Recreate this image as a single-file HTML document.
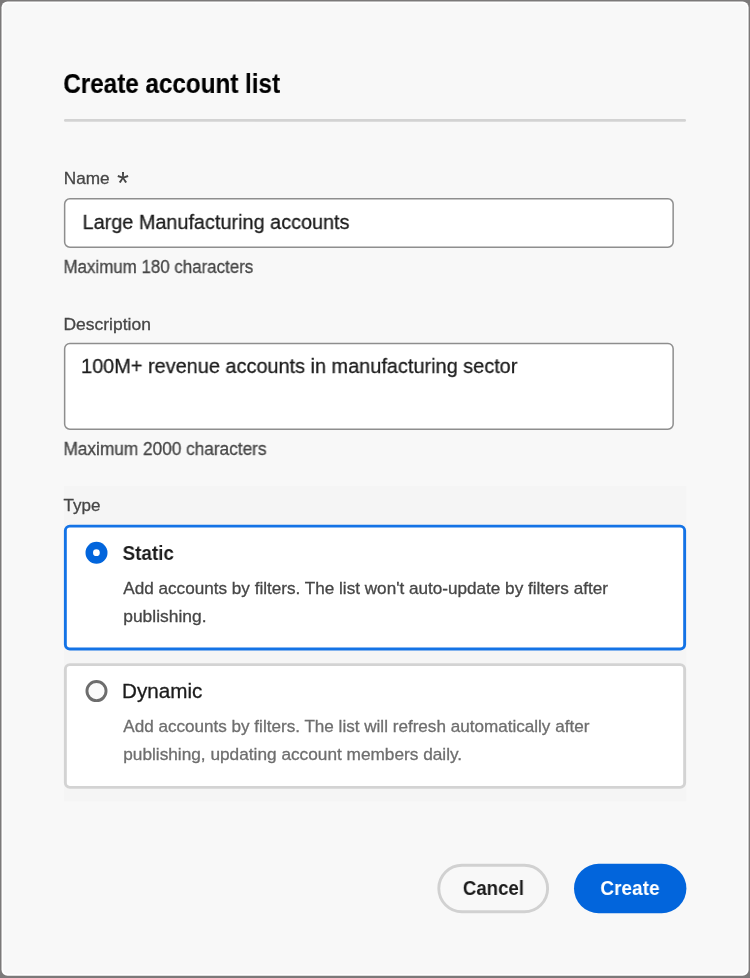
<!DOCTYPE html>
<html lang="en">
<head>
<meta charset="utf-8">
<title>Create account list</title>
<style>
html,body{margin:0;padding:0}
body{width:750px;height:978px;position:relative;overflow:hidden;background:#7b7979;font-family:"Liberation Sans",sans-serif}
h2,p,label,button,form,fieldset,legend{margin:0;padding:0;border:0;font:inherit;background:none;min-width:0}
.abs{position:absolute;left:0;top:0}
.t{position:absolute;left:0;white-space:nowrap;line-height:1;transform-origin:0 0;display:block;will-change:transform;-webkit-text-stroke:0.3px currentColor}
button.t{cursor:pointer;text-align:left}
#t_title{top:70px;font-size:27.5px;font-weight:700;color:#000000;-webkit-text-stroke:0.2px currentColor;transform:translateX(63.36px) scaleX(0.8807)}
#t_name{top:170px;font-size:17px;font-weight:400;color:#464646;transform:translateX(63.74px) scaleX(1.0115)}
#t_ast{top:168px;font-size:30.5px;font-weight:400;color:#464646;-webkit-text-stroke:0;transform:translateX(117.00px) scaleX(1.0049)}
#t_nameval{top:212px;font-size:20.5px;font-weight:400;color:#1c1c1c;transform:translateX(82.55px) scaleX(0.9679)}
#t_max1{top:259px;font-size:17.5px;font-weight:400;color:#464646;transform:translateX(63.54px) scaleX(0.9653)}
#t_desc{top:316px;font-size:17px;font-weight:400;color:#464646;transform:translateX(63.47px) scaleX(1.0278)}
#t_descval{top:356px;font-size:20.5px;font-weight:400;color:#1c1c1c;transform:translateX(81.04px) scaleX(0.9706)}
#t_max2{top:441px;font-size:17.5px;font-weight:400;color:#464646;transform:translateX(63.52px) scaleX(0.9844)}
#t_type{top:497px;font-size:17px;font-weight:400;color:#464646;transform:translateX(63.50px) scaleX(1.0000)}
#t_static{top:542px;font-size:21px;font-weight:700;color:#1c1c1c;-webkit-text-stroke:0;transform:translateX(122.56px) scaleX(0.8973)}
#t_s1{top:580px;font-size:17px;font-weight:400;color:#464646;transform:translateX(123.25px) scaleX(1.0075)}
#t_s2{top:608px;font-size:17px;font-weight:400;color:#464646;transform:translateX(123.22px) scaleX(1.0248)}
#t_dynamic{top:681px;font-size:20.5px;font-weight:400;color:#1c1c1c;transform:translateX(121.99px) scaleX(1.0077)}
#t_d1{top:718px;font-size:17px;font-weight:400;color:#6e6e6e;transform:translateX(123.25px) scaleX(1.0054)}
#t_d2{top:746px;font-size:17px;font-weight:400;color:#6e6e6e;transform:translateX(123.24px) scaleX(1.0140)}
#t_cancel{top:877px;font-size:21px;font-weight:700;color:#1c1c1c;-webkit-text-stroke:0;transform:translateX(462.85px) scaleX(0.8880)}
#t_create{top:877px;font-size:21px;font-weight:700;color:#ffffff;-webkit-text-stroke:0;transform:translateX(600.32px) scaleX(0.9062)}
</style>
</head>
<body>
<div id="dialog" role="dialog" aria-modal="true" aria-labelledby="t_title">
<svg class="abs" id="shapes" width="750" height="978" viewBox="0 0 750 978" aria-hidden="true">
<!-- dialog panel -->
<rect x="1.5" y="1.6" width="747.1" height="974.2" rx="6" fill="#ffffff"/>
<rect x="3.2" y="3.3" width="743.8" height="970.8" rx="4.5" fill="#f8f8f8"/>
<!-- heading divider -->
<rect x="64" y="119.1" width="622" height="2.6" rx="1.3" fill="#d3d3d3"/>
<!-- name field -->
<rect x="64.65" y="198.85" width="608.5" height="48.3" rx="5.2" fill="#ffffff" stroke="#8e8e8e" stroke-width="1.5"/>
<!-- description field -->
<rect x="64.65" y="343.55" width="608.5" height="85.6" rx="5.2" fill="#ffffff" stroke="#8e8e8e" stroke-width="1.5"/>
<!-- type band -->
<rect x="64" y="486" width="622.4" height="315.2" fill="#f5f5f5"/>
<!-- static card (selected) -->
<rect x="65.35" y="526.1" width="619.3" height="122.9" rx="4.5" fill="#ffffff" stroke="#1473e6" stroke-width="2.9"/>
<!-- dynamic card -->
<rect x="65.35" y="664.65" width="619.3" height="122.7" rx="4.5" fill="#ffffff" stroke="#d3d3d3" stroke-width="2.9"/>
<!-- radio: selected -->
<circle cx="96.5" cy="552.8" r="11" fill="#0265dc"/>
<circle cx="96.4" cy="552.7" r="3.4" fill="#ffffff"/>
<!-- radio: unselected -->
<circle cx="96.5" cy="691.1" r="9.55" fill="#fbfbfb" stroke="#6d6d6d" stroke-width="2.9"/>
<!-- buttons -->
<rect x="438.8" y="865.2" width="108.8" height="46.6" rx="23.3" fill="#f8f8f8" stroke="#d1d1d1" stroke-width="2.9"/>
<rect x="574" y="863.8" width="112.4" height="49.4" rx="24.7" fill="#0265dc"/>
</svg>
<header>
<h2 class="t" id="t_title">Create account list</h2>
</header>
<form>
<div class="field" id="field_name">
<label class="t" id="t_name">Name</label>
<span class="t" id="t_ast">*</span>
<div class="t value" id="t_nameval">Large Manufacturing accounts</div>
<div class="t help" id="t_max1">Maximum 180 characters</div>
</div>
<div class="field" id="field_desc">
<label class="t" id="t_desc">Description</label>
<div class="t value" id="t_descval">100M+ revenue accounts in manufacturing sector</div>
<div class="t help" id="t_max2">Maximum 2000 characters</div>
</div>
<div class="field" id="field_type" role="radiogroup" aria-labelledby="t_type">
<div class="t" id="t_type">Type</div>
<div class="card selected" role="radio" aria-checked="true">
<div class="t card-title" id="t_static">Static</div>
<p class="t card-desc" id="t_s1">Add accounts by filters. The list won't auto-update by filters after</p>
<p class="t card-desc" id="t_s2">publishing.</p>
</div>
<div class="card" role="radio" aria-checked="false">
<div class="t card-title" id="t_dynamic">Dynamic</div>
<p class="t card-desc" id="t_d1">Add accounts by filters. The list will refresh automatically after</p>
<p class="t card-desc" id="t_d2">publishing, updating account members daily.</p>
</div>
</div>
</form>
<footer>
<button type="button" class="t" id="t_cancel">Cancel</button>
<button type="button" class="t" id="t_create">Create</button>
</footer>
</div>
</body>
</html>
